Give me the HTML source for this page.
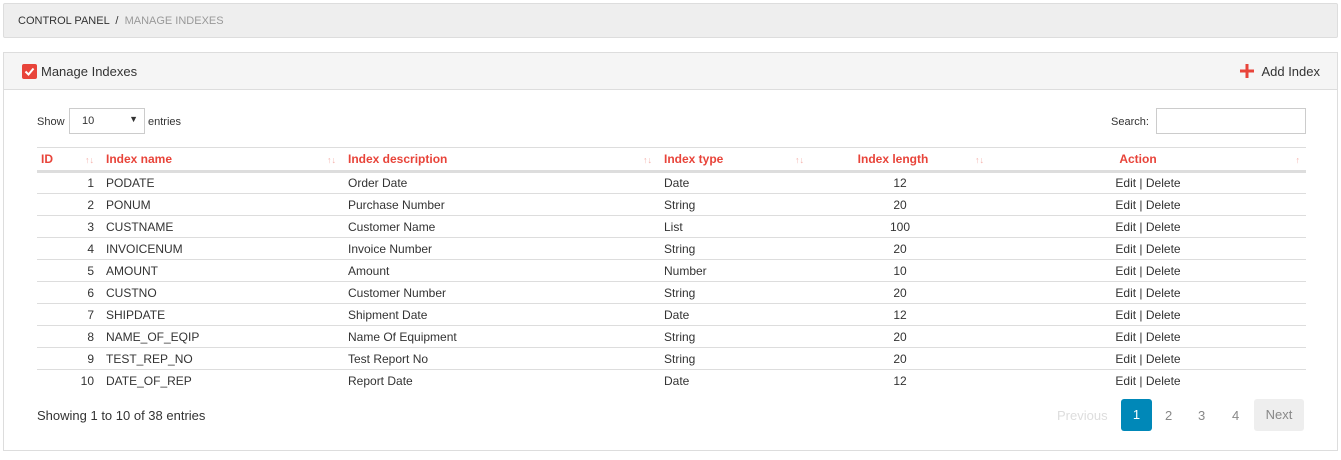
<!DOCTYPE html>
<html><head><meta charset="utf-8"><style>
*{box-sizing:border-box;margin:0;padding:0}
body{width:1341px;height:460px;background:#fff;font-family:"Liberation Sans",sans-serif;font-size:12px;color:#333;position:relative;overflow:hidden}
.bc{position:absolute;left:3px;top:3px;width:1335px;height:35px;background:#eee;border:1px solid #ddd;border-radius:2px;font-size:11px;padding:11px 0 0 14px;color:#333}
.bc span{color:#999}
.panel{position:absolute;left:3px;top:52px;width:1335px;height:399px;border:1px solid #ddd;background:#fff}
.ph{height:37px;background:#f5f5f5;border-bottom:1px solid #ddd;position:relative}
.chk{position:absolute;left:18px;top:11px;width:15px;height:15px;background:#e8443a;border-radius:2px}
.ttl{position:absolute;left:37px;top:11px;font-size:13px;color:#333}
.add{position:absolute;right:17px;top:11px;font-size:13px;color:#333}
.plus{position:absolute;right:83px;top:11px}
.abs{position:absolute}
table{position:absolute;left:33px;top:94px;width:1269px;border-collapse:collapse}
th{color:#e8443a;font-weight:bold;text-align:left;height:24px;border-top:1px solid #ddd;border-bottom:3px solid #ddd;position:relative;padding:0 6px}
th:first-child{padding-left:4px}
th i{position:absolute;right:6px;top:7px;font-style:normal;color:#f4b0aa;font-size:9px}
td{height:22px;border-bottom:1px solid #ddd;padding:0 6px;color:#333}
tr:last-child td{border-bottom:none}
.c{text-align:center}.r{text-align:right}
.pg{position:absolute;top:347px;font-size:13px;color:#888}
</style></head><body>
<div class="bc">CONTROL PANEL &nbsp;/&nbsp; <span>MANAGE INDEXES</span></div>
<div class="panel">
<div class="ph">
<div class="chk"><svg width="15" height="15"><path d="M3.5 7.5l3 3 5-6" stroke="#fff" stroke-width="2" fill="none"/></svg></div>
<div class="ttl">Manage Indexes</div>
<svg class="plus" width="14" height="14" viewBox="0 0 14 14"><path d="M7 0v14M0 7h14" stroke="#e8443a" stroke-width="3"/></svg>
<div class="add">Add Index</div>
</div>
<div class="abs" style="left:33px;top:63px;font-size:11px">Show</div>
<div class="abs" style="left:65px;top:55px;width:76px;height:26px;border:1px solid #ccc;font-size:11px;padding:6px 0 0 12px">10<span style="position:absolute;right:6px;top:5px;font-size:9px">▼</span></div>
<div class="abs" style="left:144px;top:63px;font-size:11px">entries</div>
<div class="abs" style="left:1107px;top:63px;font-size:11px">Search:</div>
<div class="abs" style="left:1152px;top:55px;width:150px;height:26px;border:1px solid #ccc"></div>
<table>
<tr><th style="width:63px">ID<i>↑↓</i></th><th style="width:242px">Index name<i>↑↓</i></th><th style="width:316px">Index description<i>↑↓</i></th><th style="width:152px">Index type<i>↑↓</i></th><th class="c" style="width:180px;padding-right:20px">Index length<i>↑↓</i></th><th class="c" style="padding-right:26px">Action<i>↑</i></th></tr>
<tr><td class="r">1</td><td>PODATE</td><td>Order Date</td><td>Date</td><td class="c">12</td><td class="c">Edit | Delete</td></tr>
<tr><td class="r">2</td><td>PONUM</td><td>Purchase Number</td><td>String</td><td class="c">20</td><td class="c">Edit | Delete</td></tr>
<tr><td class="r">3</td><td>CUSTNAME</td><td>Customer Name</td><td>List</td><td class="c">100</td><td class="c">Edit | Delete</td></tr>
<tr><td class="r">4</td><td>INVOICENUM</td><td>Invoice Number</td><td>String</td><td class="c">20</td><td class="c">Edit | Delete</td></tr>
<tr><td class="r">5</td><td>AMOUNT</td><td>Amount</td><td>Number</td><td class="c">10</td><td class="c">Edit | Delete</td></tr>
<tr><td class="r">6</td><td>CUSTNO</td><td>Customer Number</td><td>String</td><td class="c">20</td><td class="c">Edit | Delete</td></tr>
<tr><td class="r">7</td><td>SHIPDATE</td><td>Shipment Date</td><td>Date</td><td class="c">12</td><td class="c">Edit | Delete</td></tr>
<tr><td class="r">8</td><td>NAME_OF_EQIP</td><td>Name Of Equipment</td><td>String</td><td class="c">20</td><td class="c">Edit | Delete</td></tr>
<tr><td class="r">9</td><td>TEST_REP_NO</td><td>Test Report No</td><td>String</td><td class="c">20</td><td class="c">Edit | Delete</td></tr>
<tr><td class="r">10</td><td>DATE_OF_REP</td><td>Report Date</td><td>Date</td><td class="c">12</td><td class="c">Edit | Delete</td></tr>
</table>
<div class="abs" style="left:33px;top:355px;font-size:13px">Showing 1 to 10 of 38 entries</div>
<div class="pg" style="left:1053px;top:355px;color:#ddd">Previous</div>
<div class="abs" style="left:1117px;top:346px;width:31px;height:32px;background:#0088b8;border-radius:3px;color:#fff;font-size:13px;text-align:center;line-height:32px">1</div>
<div class="pg" style="left:1161px;top:355px">2</div>
<div class="pg" style="left:1194px;top:355px">3</div>
<div class="pg" style="left:1228px;top:355px">4</div>
<div class="abs" style="left:1250px;top:346px;width:50px;height:32px;background:#eee;border-radius:3px;color:#888;font-size:13px;text-align:center;line-height:32px">Next</div>
</div>
</body></html>
